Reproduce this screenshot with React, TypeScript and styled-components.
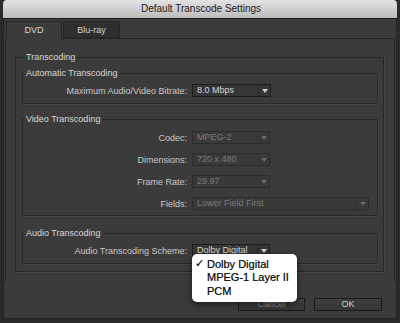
import React from 'react'
import styled, { createGlobalStyle } from 'styled-components'

const GlobalStyle = createGlobalStyle`
  html, body {
    margin: 0;
    padding: 0;
    background: #2b2b2b;
    width: 400px;
    height: 323px;
    overflow: hidden;
  }
  * { box-sizing: border-box; }
`

const Window = styled.div`
  margin-left: 3px;
  width: 394px;
  height: 319px;
  display: flex;
  flex-direction: column;
  font-family: "Liberation Sans", Arial, sans-serif;
`

const TitleBar = styled.div`
  height: 19px;
  flex: none;
  border-radius: 4px 4px 0 0;
  background: linear-gradient(#e2e2e2, #bcbcbc);
  border-bottom: 1px solid #1e1e1e;
  color: #202020;
  font-size: 10px;
  line-height: 18px;
  text-align: center;
  padding-left: 2px;
`

const Body = styled.div`
  flex: 1;
  background: #3b3b3b;
  border: 1px solid #242424;
  border-top: none;
  padding: 2px 1px 0 1px;
  display: flex;
  flex-direction: column;
`

const TabStrip = styled.div`
  display: flex;
  height: 17px;
  padding-left: 1px;
  gap: 1px;
  position: relative;
  z-index: 1;
`

const Tab = styled.div<{ $active?: boolean }>`
  width: ${p => (p.$active ? 56 : 57)}px;
  height: ${p => (p.$active ? 18 : 17)}px;
  border: 1px solid #262626;
  border-bottom: ${p => (p.$active ? 'none' : '1px solid #262626')};
  background: ${p => (p.$active ? '#3b3b3b' : '#2f2f2f')};
  color: #d6d6d6;
  font-size: 9px;
  line-height: 16px;
  text-align: center;
`

const Pane = styled.div`
  border: 1px solid #262626;
  border-bottom-color: transparent;
  padding: 0 10px 10px 9px;
`

const Group = styled.fieldset<{ $outer?: boolean; $gap?: number }>`
  margin: ${p => (p.$outer ? '13px 0 0 0' : `${p.$gap || 0}px 0 0 0`)};
  padding: ${p => (p.$outer ? '6px 5px 7px 6px' : '0')};
  border: 1px solid #272727;
  box-shadow: 1px 1px 0 #464646;
  min-inline-size: 0;
`

const Legend = styled.legend<{ $outer?: boolean }>`
  font-size: 9px;
  line-height: 10px;
  color: #d8d8d8;
  padding: 0 2px;
  margin-left: ${p => (p.$outer ? 2 : 1)}px;
`

const FormGrid = styled.div<{ $top: number; $bottom: number }>`
  display: grid;
  grid-template-columns: 164px 1fr;
  column-gap: 5px;
  row-gap: 9px;
  align-items: center;
  padding: ${p => p.$top}px 0 ${p => p.$bottom}px 0;
`

const Label = styled.div`
  text-align: right;
  font-size: 9px;
  color: #cacaca;
  white-space: nowrap;
`

const SelectWrap = styled.div`
  position: relative;
`

const Select = styled.div<{ $disabled?: boolean; $width: number }>`
  width: ${p => p.$width}px;
  height: 13px;
  border: 1px solid ${p => (p.$disabled ? '#2c2c2c' : '#1c1c1c')};
  background: ${p => (p.$disabled ? '#393939' : '#363636')};
  color: ${p => (p.$disabled ? '#7c7c7c' : '#d6d6d6')};
  font-size: 9px;
  line-height: 11px;
  display: flex;
  align-items: center;
`

const SelectText = styled.span`
  flex: 1;
  padding-left: 4px;
  white-space: nowrap;
  overflow: hidden;
`

const Arrow = styled.span<{ $disabled?: boolean }>`
  width: 12px;
  height: 100%;
  border-left: 1px solid ${p => (p.$disabled ? '#333' : '#2a2a2a')};
  display: flex;
  align-items: center;
  justify-content: center;

  &::after {
    content: '';
    border-left: 3px solid transparent;
    border-right: 3px solid transparent;
    border-top: 4px solid ${p => (p.$disabled ? '#6a6a6a' : '#d0d0d0')};
  }
`

const Menu = styled.div`
  position: absolute;
  left: 0;
  top: 10px;
  width: 105px;
  background: #fff;
  border-radius: 5px;
  box-shadow: 0 2px 6px rgba(0, 0, 0, 0.55);
  padding: 3px 0 4px 0;
  z-index: 5;
`

const MenuItem = styled.div`
  display: flex;
  align-items: center;
  height: 13.5px;
  font-size: 11px;
  color: #000;
  white-space: nowrap;
  -webkit-text-stroke: 0.2px #000;
`

const Check = styled.span`
  width: 15px;
  padding-left: 3px;
  font-family: "DejaVu Sans", sans-serif;
  font-size: 11px;
`

const Footer = styled.div`
  display: flex;
  justify-content: flex-end;
  gap: 9px;
  padding: 15px 13px 0 0;
`

const Button = styled.div<{ $primary?: boolean }>`
  width: ${p => (p.$primary ? 68 : 67)}px;
  height: 13px;
  border: 1px solid #191919;
  background: linear-gradient(#3e3e3e, #363636);
  color: ${p => (p.$primary ? '#cfcfcf' : '#8e8e8e')};
  font-size: 9px;
  line-height: 11px;
  text-align: center;
`

type Row = { label: string; value: string; width?: number; disabled?: boolean }

const videoRows: Row[] = [
  { label: 'Codec:', value: 'MPEG-2', disabled: true },
  { label: 'Dimensions:', value: '720 x 480', disabled: true },
  { label: 'Frame Rate:', value: '29.97', disabled: true },
  { label: 'Fields:', value: 'Lower Field First', width: 177, disabled: true },
]

function Dropdown({ row, children }: { row: Row; children?: React.ReactNode }) {
  return (
    <SelectWrap>
      <Select $disabled={row.disabled} $width={row.width || 78}>
        <SelectText>{row.value}</SelectText>
        <Arrow $disabled={row.disabled} />
      </Select>
      {children}
    </SelectWrap>
  )
}

export default function App() {
  return (
    <>
      <GlobalStyle />
      <Window>
        <TitleBar>Default Transcode Settings</TitleBar>
        <Body>
          <TabStrip>
            <Tab $active>DVD</Tab>
            <Tab>Blu-ray</Tab>
          </TabStrip>
          <Pane>
            <Group $outer>
              <Legend $outer>Transcoding</Legend>

              <Group>
                <Legend>Automatic Transcoding</Legend>
                <FormGrid $top={6} $bottom={6}>
                  <Label>Maximum Audio/Video Bitrate:</Label>
                  <Dropdown row={{ label: '', value: '8.0 Mbps', width: 79 }} />
                </FormGrid>
              </Group>

              <Group $gap={10}>
                <Legend>Video Transcoding</Legend>
                <FormGrid $top={7} $bottom={5}>
                  {videoRows.map(r => (
                    <React.Fragment key={r.label}>
                      <Label>{r.label}</Label>
                      <Dropdown row={r} />
                    </React.Fragment>
                  ))}
                </FormGrid>
              </Group>

              <Group $gap={12}>
                <Legend>Audio Transcoding</Legend>
                <FormGrid $top={6} $bottom={6}>
                  <Label>Audio Transcoding Scheme:</Label>
                  <Dropdown row={{ label: '', value: 'Dolby Digital', width: 78 }}>
                    <Menu>
                      <MenuItem><Check>✓</Check>Dolby Digital</MenuItem>
                      <MenuItem><Check />MPEG-1 Layer II</MenuItem>
                      <MenuItem><Check />PCM</MenuItem>
                    </Menu>
                  </Dropdown>
                </FormGrid>
              </Group>
            </Group>
          </Pane>
          <Footer>
            <Button>Cancel</Button>
            <Button $primary>OK</Button>
          </Footer>
        </Body>
      </Window>
    </>
  )
}
